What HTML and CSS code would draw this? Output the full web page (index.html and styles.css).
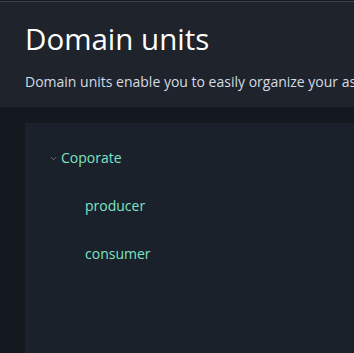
FILE: index.html
```html
<!DOCTYPE html>
<html>
<head>
<meta charset="utf-8">
<link rel="stylesheet" href="styles.css">
</head>
<body>
<div class="topline"></div>
<header class="header">
  <h1 class="title">Domain units</h1>
  <p class="desc">Domain units enable you to easily organize your assets and users.</p>
</header>
<main class="main">
  <section class="panel">
    <ul class="tree">
      <li class="node root">
        <svg class="chev" width="7" height="5" viewBox="0 0 7 5"><path d="M1 1.2 L3.5 3.7 L6 1.2" fill="none" stroke="#6b7480" stroke-width="1"/></svg>
        <span class="label">Coporate</span>
      </li>
      <li class="node child"><span class="label">producer</span></li>
      <li class="node child"><span class="label">consumer</span></li>
    </ul>
  </section>
</main>
</body>
</html>
```
FILE: styles.css
```css
html, body {
  margin: 0;
  padding: 0;
  background: #141920;
  overflow: hidden;
  width: 354px;
  height: 353px;
}
body {
  font-family: "Open Sans", "Noto Sans", sans-serif;
}
.topline {
  height: 1px;
  background: #161b22;
  border-bottom: 1px solid #3a414c;
}
.header {
  background: #1e232c;
  padding: 19px 0 0 25px;
  height: 86px;
  white-space: nowrap;
  overflow: hidden;
}
.title {
  margin: 0;
  font-weight: 400;
  font-size: 29.5px;
  line-height: 36px;
  color: #ffffff;
}
.desc {
  margin: 15px 0 0;
  font-size: 14px;
  line-height: 20px;
  color: #d5dbe3;
}
.main {
  padding: 16px 0 0 25px;
}
.panel {
  background: #1b212b;
  height: 206px;
  padding-top: 24px;
}
.tree {
  list-style: none;
  margin: 0;
  padding: 0;
}
.node {
  display: flex;
  align-items: center;
  height: 20px;
  margin-bottom: 28px;
  font-size: 14px;
  color: #7fe3c3;
}
.root {
  padding-left: 25px;
}
.chev {
  margin-right: 4px;
  margin-top: 2px;
}
.child {
  padding-left: 60px;
}
```
